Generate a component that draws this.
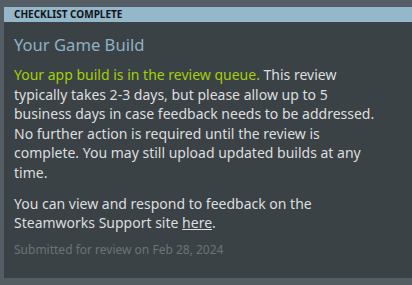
export default function App() {
    return (
        <div className="h-[285px] w-[412px] bg-[#545c64] pt-[7px] pb-[7px] pl-[4px]" style={{ fontFamily: '"Noto Sans", Arial, sans-serif' }}>
            <div className="h-full bg-[#3b4245]">
                {/* Header band */}
                <div className="h-[15px] bg-[#94b7ca] pl-[10px] text-[10px] font-bold leading-[15px] text-[#101417]">
                    CHECKLIST COMPLETE
                </div>

                <div className="pl-[10px] pr-[28px] pt-[12px]">
                    <h1 className="text-[16.6px] leading-[22px] text-[#8fb1c4]">Your Game Build</h1>

                    <p className="mt-[9px] text-[14px] leading-[19.6px] text-[#dcdedf]">
                        <span className="text-[#a4d007]">Your app build is in the review queue.</span> This review typically takes 2-3 days, but please allow up to 5 business days in case feedback needs to be addressed. No further action is required until the review is complete. You may still upload updated builds at any time.
                    </p>

                    <p className="mt-[11px] text-[14px] leading-[19px] text-[#dcdedf]">
                        You can view and respond to feedback on the Steamworks Support site <a className="underline">here</a>.
                    </p>

                    <p className="mt-[9px] text-[12px] leading-[18px] text-[#6b7378]">
                        Submitted for review on Feb 28, 2024
                    </p>
                </div>
            </div>
        </div>
    );
}
